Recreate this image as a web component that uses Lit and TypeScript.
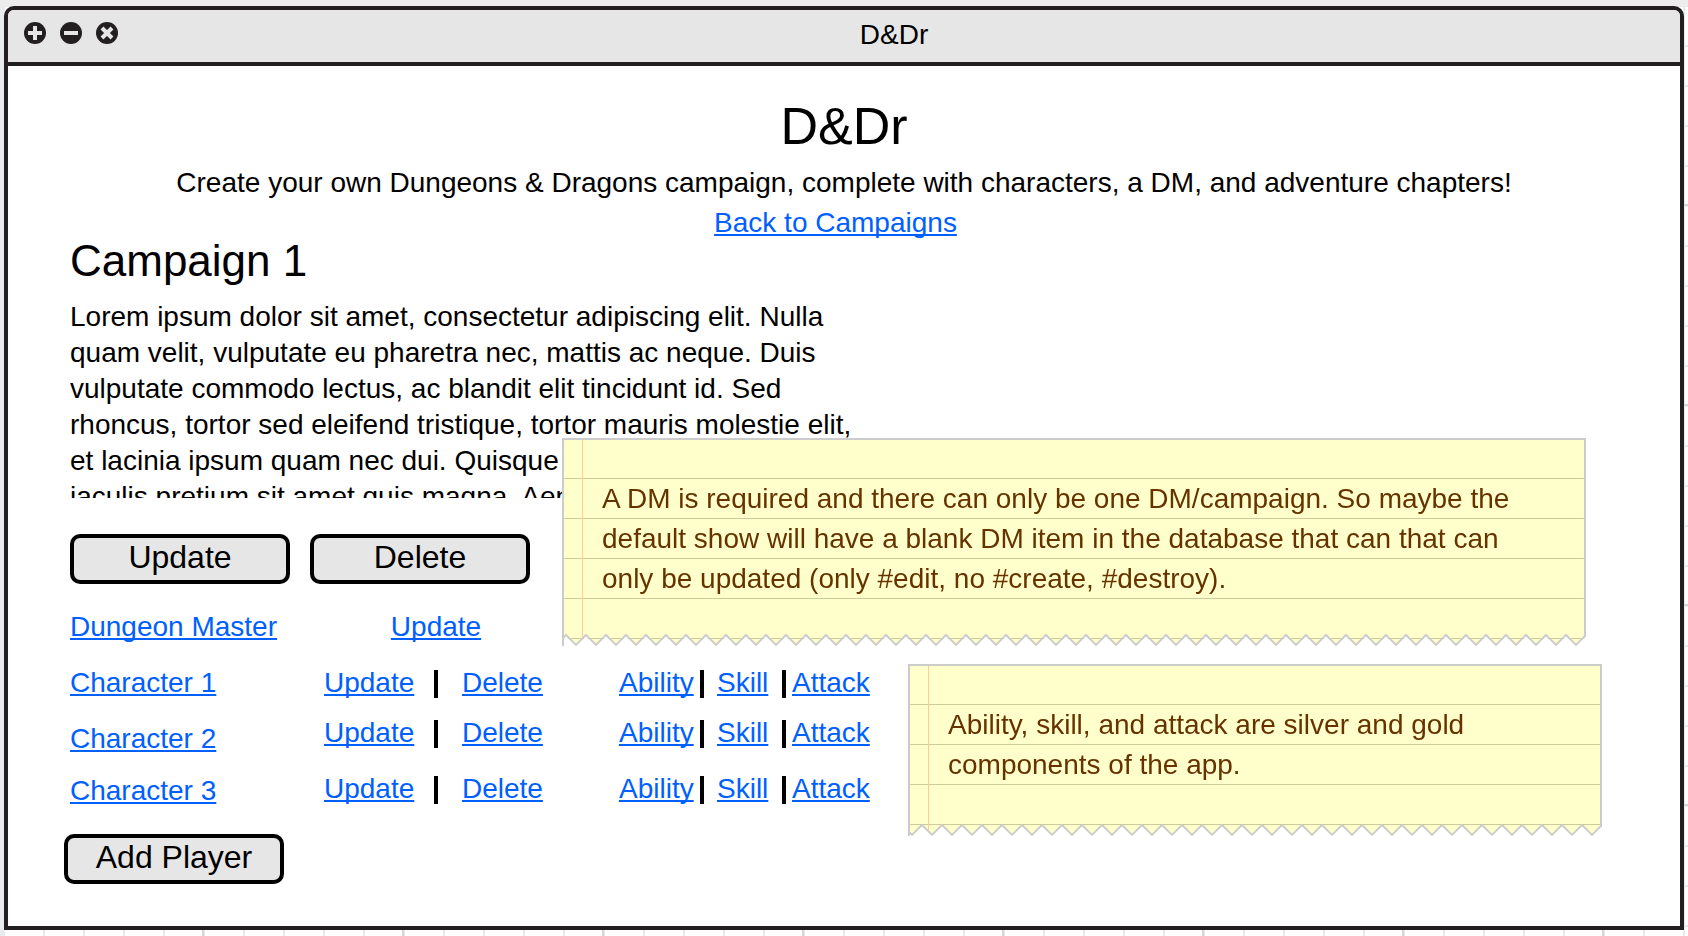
import { LitElement, html, css, svg } from "lit";
import { customElement, property } from "lit/decorators.js";

@customElement("sticky-note")
class StickyNote extends LitElement {
  static styles = css`
    :host {
      display: block;
      box-sizing: border-box;
      padding: 41px 40px 47px;
      color: #663300;
      font-size: 28px;
      line-height: 40px;
      background:
        url("data:image/svg+xml,%3Csvg xmlns='http://www.w3.org/2000/svg' width='20' height='12'%3E%3Cpath d='M-1 0L0 1L10 11L20 1L21 0' fill='none' stroke='%23ccc' stroke-width='2'/%3E%3C/svg%3E") right bottom / 20px 12px repeat-x,
        linear-gradient(#ccc, #ccc) left top / 2px 100% no-repeat,
        linear-gradient(#ccc, #ccc) right top / 2px 100% no-repeat,
        linear-gradient(#ccc, #ccc) left top / 100% 2px no-repeat,
        linear-gradient(#ffcc99, #ffcc99) 20px 0 / 1px 100% no-repeat,
        linear-gradient(#cccc99 1px, transparent 1px) left top / 100% 40px,
        #ffffcc;
      mask:
        linear-gradient(#000, #000) left top / 100% calc(100% - 12px) no-repeat,
        linear-gradient(#000, #000) left top / 2px 100% no-repeat,
        url("data:image/svg+xml,%3Csvg xmlns='http://www.w3.org/2000/svg' width='20' height='12'%3E%3Cpath d='M0 0H20V2.4L10 12.4L0 2.4Z'/%3E%3C/svg%3E") right bottom / 20px 12px repeat-x;
    }
    :host([roomy]) {
      padding-bottom: 51px;
    }
  `;
  @property({ type: Boolean, reflect: true }) roomy = false;
  render() {
    return html`<slot></slot>`;
  }
}

const controls = [
  { label: "Zoom", glyph: svg`<path d="M11 4v14M4 11h14" />` },
  { label: "Minimize", glyph: svg`<path d="M4 11h14" />` },
  { label: "Close", glyph: svg`<path d="M6 6l10 10M16 6l-10 10" />` },
];

const characters = ["Character 1", "Character 2", "Character 3"];

@customElement("app-root")
class AppRoot extends LitElement {
  static styles = css`
    :host {
      display: flex;
      flex-direction: column;
      box-sizing: border-box;
      min-height: 100vh;
      padding: 6px 4px;
      font-family: "Liberation Sans", Arial, sans-serif;
      font-size: 28px;
      line-height: 36px;
      color: #000;
      background:
        linear-gradient(#ededed, #ededed) left top / 100% 6px no-repeat,
        linear-gradient(#e9ebee, #e9ebee) left top / 4px 100% no-repeat,
        linear-gradient(90deg, #d6d6d6 2px, transparent 2px) 2px 0 / 200px 100%,
        linear-gradient(#d6d6d6 2px, transparent 2px) 0 4px / 100% 200px,
        linear-gradient(90deg, #eaeaea 2px, transparent 2px) 3px 0 / 40px 100%,
        linear-gradient(#eaeaea 2px, transparent 2px) 0 5px / 100% 40px,
        #fff;
    }
    .window {
      flex: 1;
      display: flex;
      flex-direction: column;
      border: 4px solid #231f20;
      border-radius: 10px 10px 0 0;
      background: #fff;
    }
    .titlebar {
      display: flex;
      align-items: flex-start;
      padding: 7px 10px 9px 16px;
      border-bottom: 4px solid #231f20;
      border-radius: 6px 6px 0 0;
      background: #e6e6e6;
    }
    .controls {
      display: flex;
      gap: 14px;
      padding-top: 5px;
    }
    .control {
      width: 22px;
      height: 22px;
      padding: 0;
      border: 0;
      background: none;
    }
    .control svg {
      display: block;
      fill: #231f20;
      stroke: #e6e6e6;
      stroke-width: 4;
    }
    .title {
      flex: 1;
      text-align: center;
    }
    .content {
      position: relative;
      padding: 30px 62px 42px;
    }
    .heading {
      text-align: center;
    }
    h1,
    h2,
    p {
      margin: 0;
      font-weight: 400;
    }
    h1 {
      padding-bottom: 7px;
      font-size: 52px;
      line-height: 60px;
    }
    .tagline,
    .back {
      line-height: 40px;
    }
    .back {
      padding-right: 17px;
    }
    h2 {
      font-size: 44px;
      line-height: 36px;
    }
    .summary {
      max-width: 800px;
      height: 199px;
      margin-top: 20px;
      overflow: hidden;
    }
    a {
      color: #0060ff;
      text-decoration: underline;
      text-decoration-thickness: 2px;
      text-underline-offset: 2px;
      text-decoration-skip-ink: none;
    }
    .buttons {
      display: flex;
      gap: 20px;
      margin-top: 36px;
    }
    .button {
      width: 220px;
      height: 50px;
      padding: 0 0 4px;
      border: 4px solid #000;
      border-radius: 10px;
      background: #e6e6e6;
      color: #000;
      font: inherit;
      font-size: 32px;
      line-height: 36px;
    }
    .players {
      display: grid;
      grid-template-columns: 254px 224px auto;
      justify-content: start;
      margin-top: 25px;
    }
    .names,
    .actions,
    .traits {
      display: grid;
      align-items: start;
      align-content: start;
      justify-items: start;
    }
    .names {
      grid-template-rows: 56px 56px 52px 36px;
    }
    .actions {
      grid-template-rows: 56px 50px 56px 36px;
    }
    .traits {
      grid-template-rows: 50px 56px 36px;
      padding: 56px 0 0 71px;
    }
    .master {
      justify-self: center;
    }
    .row {
      display: grid;
      align-items: start;
    }
    .actions .row {
      grid-template-columns: 110px 28px auto;
    }
    .traits .row {
      grid-template-columns: 81px 17px 65px 10px auto;
    }
    .bar {
      width: 4px;
      height: 28px;
      margin-top: 5px;
      background: #000;
    }
    .add {
      margin: 25px 0 0 -6px;
    }
    .note {
      position: absolute;
    }
    .note-master {
      top: 372px;
      left: 554px;
      right: 94px;
    }
    .note-traits {
      top: 598px;
      left: 900px;
      right: 78px;
    }
  `;

  render() {
    return html`
      <div class="window">
        <header class="titlebar">
          <div class="controls">
            ${controls.map(
              (c) => html`<button class="control" aria-label=${c.label}>
                <svg width="22" height="22" viewBox="0 0 22 22" aria-hidden="true">
                  <circle cx="11" cy="11" r="11" stroke="none" />
                  ${c.glyph}
                </svg>
              </button>`
            )}
          </div>
          <div class="title">D&amp;Dr</div>
        </header>
        <main class="content">
          <div class="heading">
            <h1>D&amp;Dr</h1>
            <p class="tagline">
              Create your own Dungeons &amp; Dragons campaign, complete with characters, a DM, and adventure chapters!
            </p>
            <p class="back"><a href="#campaigns">Back to Campaigns</a></p>
          </div>
          <h2>Campaign 1</h2>
          <p class="summary">
            Lorem ipsum dolor sit amet, consectetur adipiscing elit. Nulla quam velit, vulputate eu pharetra nec, mattis
            ac neque. Duis vulputate commodo lectus, ac blandit elit tincidunt id. Sed rhoncus, tortor sed eleifend
            tristique, tortor mauris molestie elit, et lacinia ipsum quam nec dui. Quisque nec mauris sit amet elit
            iaculis pretium sit amet quis magna. Aenean velit odio, elementum in tempus ut, vehicula eu diam.
          </p>
          <div class="buttons">
            <button class="button">Update</button>
            <button class="button">Delete</button>
          </div>
          <div class="players">
            <div class="names">
              <a href="#master">Dungeon Master</a>
              ${characters.map((name) => html`<a href="#character">${name}</a>`)}
            </div>
            <div class="actions">
              <a class="master" href="#update">Update</a>
              ${characters.map(
                () => html`<div class="row">
                  <a href="#update">Update</a><span class="bar"></span><a href="#delete">Delete</a>
                </div>`
              )}
            </div>
            <div class="traits">
              ${characters.map(
                () => html`<div class="row">
                  <a href="#ability">Ability</a><span class="bar"></span><a href="#skill">Skill</a
                  ><span class="bar"></span><a href="#attack">Attack</a>
                </div>`
              )}
            </div>
          </div>
          <button class="button add">Add Player</button>
          <sticky-note class="note note-master"
            >A DM is required and there can only be one DM/campaign. So maybe the default show will have a blank DM item
            in the database that can that can only be updated (only #edit, no #create, #destroy).</sticky-note
          >
          <sticky-note class="note note-traits" roomy
            >Ability, skill, and attack are silver and gold components of the app.</sticky-note
          >
        </main>
      </div>
    `;
  }
}
